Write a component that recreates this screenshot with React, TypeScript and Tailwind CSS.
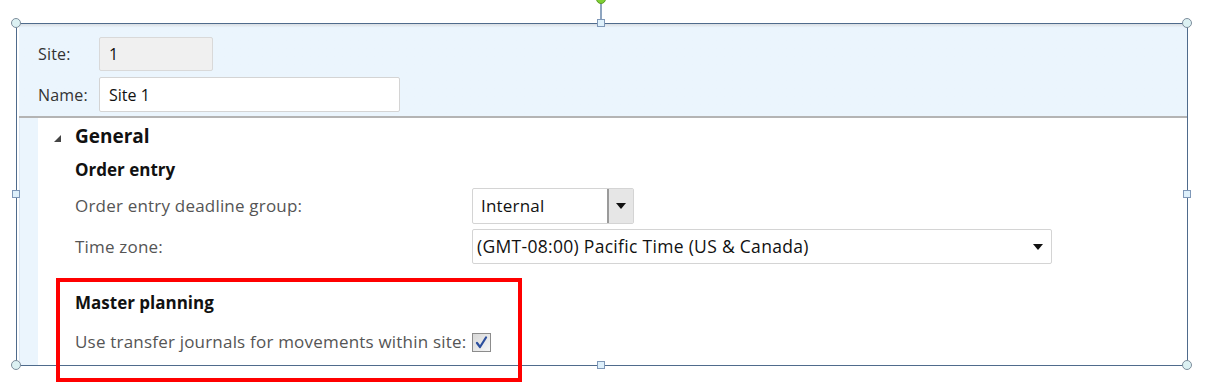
import React from "react";

const font = "font-['Segoe_UI','Open_Sans','Liberation_Sans',sans-serif]";

const Corner = ({ className }: { className: string }) => (
  <div
    className={`absolute w-[10px] h-[10px] rounded-full bg-[#dcf1f3] border border-[#7d8d9c] ${className}`}
  />
);

const Side = ({ className }: { className: string }) => (
  <div
    className={`absolute w-[8px] h-[8px] bg-[#def0fb] border border-[#7f98b8] ${className}`}
  />
);

const DownArrow = () => (
  <svg width="10" height="6" viewBox="0 0 10 6">
    <polygon points="0,0 10,0 5,6" fill="#111" />
  </svg>
);

const label = "text-[17px] tracking-[0.2px] text-[#555]";
const value = "text-[17px] tracking-[0.2px] text-[#111]";

const App = () => {
  return (
    <div className={`relative w-[1210px] h-[389px] bg-white overflow-hidden ${font}`}>
      {/* selected object frame */}
      <div className="ml-[16px] mt-[23px] w-[1172px] h-[343px] border border-[#4f6b8c] flex flex-col">
        {/* header band */}
        <div className="h-[94px] bg-[#ebf5fd] bg-gradient-to-b from-[#d9dee3] from-0% via-[#ebf5fd] via-4% to-[#ebf5fd] pl-[19px] pt-[13px] flex flex-col gap-[6px] border-b-2 border-[#b4b4b4] ml-[2px]">
          <div className="flex items-center">
            <span className="w-[61px] text-[16px] tracking-[0.2px] text-[#333]">Site:</span>
            <div className="w-[114px] h-[34px] bg-[#f0f0f0] border border-[#d9d9d9] rounded-[2px] flex items-center pl-[9px] text-[16px] text-[#111]">
              1
            </div>
          </div>
          <div className="flex items-center">
            <span className="w-[61px] text-[16px] tracking-[0.2px] text-[#333]">Name:</span>
            <div className="w-[301px] h-[35px] bg-white border border-[#d4d4d4] rounded-[2px] flex items-center pl-[9px] text-[16px] text-[#111]">
              Site 1
            </div>
          </div>
        </div>

        {/* body */}
        <div className="flex flex-1">
          <div className="w-[19px] bg-[#ebf5fd] border-l border-[#dbe7f3] ml-[2px]" />
          <div className="flex-1 bg-white pl-[15px] pt-[4px]">
            <div className="flex items-center h-[28px]">
              <svg width="7" height="7" viewBox="0 0 7 7" className="ml-[1px] mt-[4px]">
                <polygon points="7,0 7,7 0,7" fill="#444" />
              </svg>
              <span className="ml-[14px] text-[19px] font-bold text-[#111]">General</span>
            </div>
            <div className="ml-[22px] mt-[8px] text-[17px] font-bold text-[#111] h-[24px] leading-[24px]">
              Order entry
            </div>
            <div className="ml-[22px] mt-[6px] flex items-center h-[36px]">
              <span className={`w-[397px] ${label}`}>Order entry deadline group:</span>
              <div className="w-[162px] h-[36px] border border-[#d4d4d4] rounded-[2px] flex items-center">
                <span className={`flex-1 pl-[8px] ${value}`}>Internal</span>
                <div className="w-[26px] h-full bg-[#e6e6e6] border-l-2 border-[#9a9a9a] flex items-center justify-center">
                  <DownArrow />
                </div>
              </div>
            </div>
            <div className="ml-[22px] mt-[5px] flex items-center h-[35px]">
              <span className={`w-[397px] ${label}`}>Time zone:</span>
              <div className="w-[580px] h-[35px] border border-[#d4d4d4] rounded-[2px] flex items-center justify-between pl-[4px] pr-[8px]">
                <span className="text-[17.5px] tracking-[0.3px] text-[#111]">(GMT-08:00) Pacific Time (US &amp; Canada)</span>
                <DownArrow />
              </div>
            </div>
            <div className="ml-[22px] mt-[27px] text-[17px] font-bold text-[#111] h-[24px] leading-[24px]">
              Master planning
            </div>
            <div className="ml-[22px] mt-[16px] flex items-center h-[22px]">
              <span className={`w-[397px] ${label}`}>Use transfer journals for movements within site:</span>
              <div className="w-[19px] h-[19px] border border-[#8c8c8c] bg-gradient-to-br from-[#d8d8d8] to-[#f6f6f6] flex items-center justify-center">
                <svg width="13" height="13" viewBox="0 0 13 13">
                  <path d="M2 7 L5 11 L11 1.5" fill="none" stroke="#2c4f9e" strokeWidth="2.2" strokeLinecap="round" strokeLinejoin="round" />
                </svg>
              </div>
            </div>
          </div>
        </div>
      </div>

      {/* rotation handle */}
      <div className="absolute left-[600px] top-[2px] w-[2px] h-[19px] bg-[#8ea5c0]" />
      <div className="absolute left-[596px] top-[-6px] w-[10px] h-[10px] rounded-full bg-[#7fd033] border border-[#5c9a2a]" />

      {/* resize handles */}
      <Corner className="left-[11px] top-[18px]" />
      <Corner className="left-[1182px] top-[18px]" />
      <Corner className="left-[11px] top-[360px]" />
      <Corner className="left-[1182px] top-[360px]" />
      <Side className="left-[597px] top-[19px]" />
      <Side className="left-[597px] top-[361px]" />
      <Side className="left-[12px] top-[190px]" />
      <Side className="left-[1183px] top-[190px]" />

      {/* highlight box */}
      <div className="absolute left-[56px] top-[278px] w-[466px] h-[104px] border-4 border-[#ff0000]" />
    </div>
  );
};

export default App;
